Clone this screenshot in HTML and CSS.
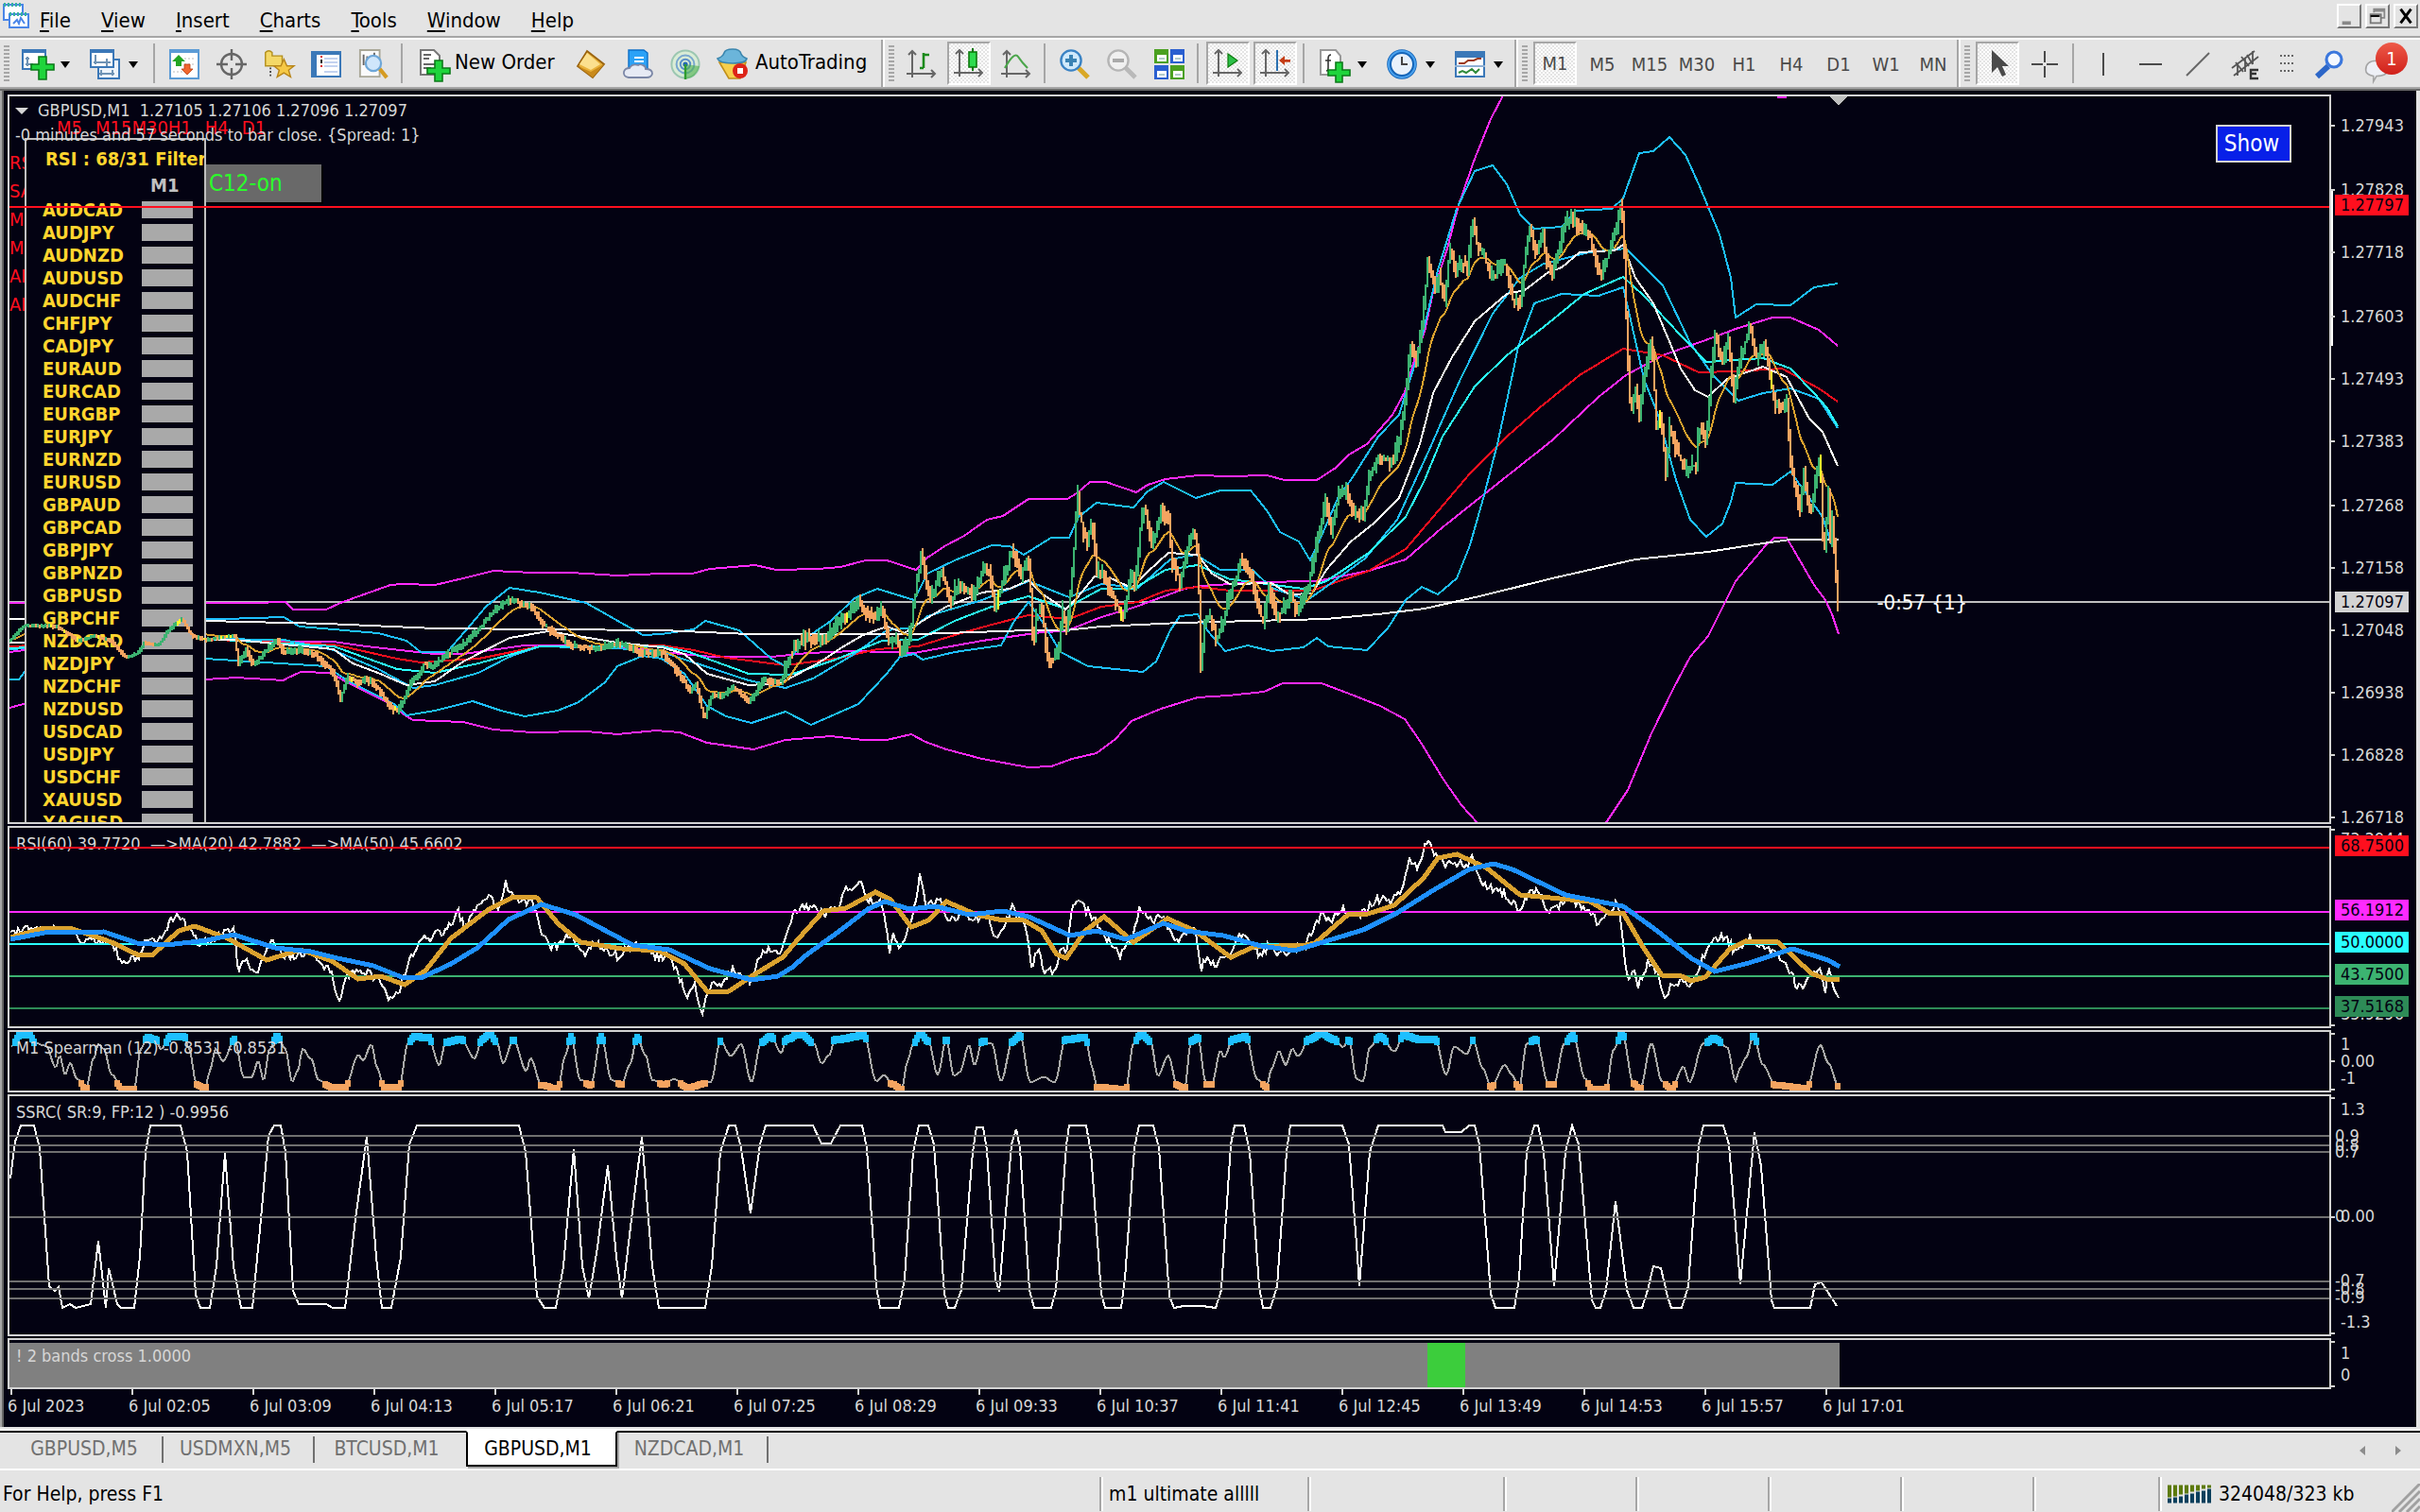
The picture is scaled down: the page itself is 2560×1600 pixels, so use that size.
FILE: index.html
```html
<!DOCTYPE html>
<html lang="en">

<head>
    <meta charset="UTF-8">
    <meta name="viewport" content="width=device-width, initial-scale=1.0">
    <title>GBPUSD,M1</title>
    <link rel="stylesheet" href="styles.css">
</head>

<body>
    <header class="menubar">
        <svg class="app-icon" viewBox="0 0 15 14">
            <rect x="1" y="1" width="10" height="8" fill="#fff" stroke="#4a86e8" />
            <path d="M1 1h10" stroke="#35b0a0" stroke-width="2" stroke-dasharray="1 1" />
            <rect x="4" y="6" width="10" height="7" fill="#fff" stroke="#4a86e8" />
            <path d="M4 6h10" stroke="#35b0a0" stroke-width="2" stroke-dasharray="1 1" />
            <path d="M6 11l2-2 1 2 1-3 2 3" fill="none" stroke="#4a86e8" />
        </svg>
        <nav class="menu">
            <button><u>F</u>ile</button>
            <button><u>V</u>iew</button>
            <button><u>I</u>nsert</button>
            <button><u>C</u>harts</button>
            <button><u>T</u>ools</button>
            <button><u>W</u>indow</button>
            <button><u>H</u>elp</button>
        </nav>
        <div class="window-buttons">
            <button aria-label="Minimize"><svg viewBox="0 0 12 12"><path d="M2 10h5" stroke="#888" stroke-width="2" /></svg></button>
            <button aria-label="Restore"><svg viewBox="0 0 12 12"><path d="M4 4V2h6v5H8M4 3h6" fill="none" stroke="#888" /><path d="M2 5h6v5H2zM2 6h6" fill="none" stroke="#777" /><path d="M2 6h5" stroke="#000" /></svg></button>
            <button aria-label="Close"><svg viewBox="0 0 12 12"><path d="M3 2l6 8M9 2L3 10" stroke="#000" stroke-width="1.6" /></svg></button>
        </div>
    </header>

    <div class="toolbar">
        <span class="grip"></span>
        <button class="tool drop" aria-label="New chart">
            <svg viewBox="0 0 16 16"><rect x="0.5" y="0.5" width="12" height="10" fill="#fff" stroke="#3b78b8" /><path d="M0 1h13" stroke="#3b78b8" stroke-width="2" /><path d="M3 4v5M2 8h4M2 5h2" stroke="#6f93b5" fill="none" /><path d="M9 4h4v4h4v3h-4v5H9v-5H5V8h4z" fill="#1fd43c" stroke="#0b7a18" stroke-width=".8" /></svg>
        </button>
        <button class="tool drop" aria-label="Profiles">
            <svg viewBox="0 0 16 16"><rect x="4.500" y="5.500" width="11" height="10" fill="#eef4fb" stroke="#3b78b8" /><rect x="0.500" y="0.500" width="12" height="9" fill="#fff" stroke="#3b78b8" /><path d="M0 1h13" stroke="#3b78b8" stroke-width="2" /><path d="M3 3v5M2 7h9M9 5v4M6 11v3M5 13h8M12 11v3" stroke="#6f93b5" fill="none" /></svg>
        </button>
        <span class="sep"></span>
        <button class="tool" aria-label="Market Watch">
            <svg viewBox="0 0 16 16"><rect x="0.500" y="0.500" width="15" height="15" fill="#fff" stroke="#5b9bd5" /><path d="M0 1h16" stroke="#5b9bd5" stroke-width="2" /><path d="M8 5h6M8 8h6M2 12h6" stroke="#ddd" stroke-dasharray="1 1" /><path d="M5 3l3.500 3.500H6.500V9h-3V6.500h-2z" fill="#23a523" /><path d="M9.500 13.500L6.500 10.500h1.500V8h3v2.500h1.500z" fill="#f0672d" stroke="#b53c12" stroke-width=".4" /></svg>
        </button>
        <button class="tool" aria-label="Data point">
            <svg viewBox="0 0 16 16"><circle cx="8" cy="8" r="5.500" fill="none" stroke="#666" stroke-width="1.200" /><path d="M8 0v6M8 10v6M0 8h6M10 8h6" stroke="#666" stroke-width="1.200" /></svg>
        </button>
        <button class="tool" aria-label="Navigator">
            <svg viewBox="0 0 18 16"><path d="M1 1q2-2 4 0v2h6v6H1z" fill="#f4d867" stroke="#b38f1c" stroke-width=".8" /><path d="M4 10v6" stroke="#444" stroke-dasharray="1 1" /><path d="M12 5l1.800 4H18l-3.200 2.500 1.200 4-4-2.400-4 2.400 1.200-4L6 9h4.200z" fill="#f6c945" stroke="#b8861b" stroke-width=".8" /></svg>
        </button>
        <button class="tool" aria-label="Data Window">
            <svg viewBox="0 0 16 16"><rect x="0.500" y="1.500" width="15" height="13" fill="#fff" stroke="#3b78b8" /><path d="M0 2h16" stroke="#3b78b8" stroke-width="2" /><path d="M2 2v12" stroke="#3b78b8" stroke-width="2" /><path d="M5 4h1M5 9h1" stroke="#d22" /><path d="M5 6h1M5 7h1" stroke="#222" /><path d="M7 5h7M7 7h7M7 9h7M7 12h7" stroke="#c3d2f0" /></svg>
        </button>
        <button class="tool" aria-label="Strategy Tester">
            <svg viewBox="0 0 17 17"><path d="M1 .5h11v15H1z" fill="#fafafa" stroke="#a9a797" /><path d="M3 3v6M5 4v3M9 2v4" stroke="#666" /><path d="M12 11l4 5" stroke="#d59b22" stroke-width="2.200" /><circle cx="8.500" cy="8" r="4.300" fill="#cfe6fb" stroke="#6ea7d8" stroke-width="1.200" /></svg>
        </button>
        <span class="sep"></span>
        <button class="tool wide new-order">
            <svg viewBox="0 0 16 16"><path d="M.5.500h7l3 3v10H.5z" fill="#fff" stroke="#777" /><path d="M2 3h4M2 5h3M2 8h6M2 10h4" stroke="#666" /><path d="M8 6h4v4h4v3h-4v4H8v-4H4v-3h4z" fill="#1fd43c" stroke="#0b7a18" stroke-width=".8" /></svg>
            <span>New Order</span>
        </button>
        <button class="tool" aria-label="MetaEditor">
            <svg viewBox="0 0 16 16"><path d="M6 1l9 7-6 7L1 9z" fill="#e9b23a" stroke="#9a6410" stroke-width=".9" /><path d="M6 2l7 6-5 3-6-3z" fill="#fbe08e" /><path d="M1 9l7 3 7-4-6 7z" fill="#c98a1b" /></svg>
        </button>
        <button class="tool" aria-label="Virtual hosting">
            <svg viewBox="0 0 16 16"><path d="M3 .5h8l2 1.500v9H3z" fill="#2ba2f7" stroke="#0e6fc7" stroke-width=".7" /><path d="M6 4h5v1H6zM6 6h5v1H6z" fill="#fff" /><path d="M3 15q-3-.5-2.500-3Q1 10 3.500 10 5 7.500 8 8.500q1-.8 2.500 0Q12 8.800 12 10.500q3.500 0 3.500 2.500-.5 2-3 2z" fill="#e6eaf4" stroke="#7a86a6" stroke-width=".9" /></svg>
        </button>
        <button class="tool" aria-label="Signals">
            <svg viewBox="0 0 16 16"><circle cx="8" cy="8" r="7.300" fill="#d9ecd6" stroke="#9cc7b2" /><circle cx="8" cy="8" r="4.700" fill="none" stroke="#79a7cf" /><circle cx="8" cy="8" r="2.600" fill="none" stroke="#5a8fc9" /><path d="M8 8v8q6-1 7.500-7z" fill="#4bb14b" opacity=".6" /><circle cx="8" cy="8" r="1.300" fill="#2469b3" /><path d="M8 8v8" stroke="#2e9c2e" stroke-width="1.200" /></svg>
        </button>
        <button class="tool wide auto-trading">
            <svg viewBox="0 0 16 16"><path d="M1 7h14l-3 8.500H6z" fill="#f6cf4c" stroke="#c08f1a" stroke-width=".8" /><path d="M0 5q3-1 3.500-3Q4 0 8 0t4.500 2.500Q13 4 15.500 5 15 7.500 8 7.500T0 5z" fill="#6bb5da" stroke="#3b86ae" stroke-width=".8" /><circle cx="12" cy="11.500" r="4" fill="#dd2418" /><rect x="10.500" y="10" width="3" height="3" fill="#fff" /></svg>
            <span>AutoTrading</span>
        </button>

        <span class="band"><span class="grip"></span></span>
        <button class="tool" aria-label="Bar chart">
            <svg viewBox="0 0 16 16"><path d="M3 1v14M0 13h15M1 3l2-2 2 2M13 11l2 2-2 2" fill="none" stroke="#666" /><path d="M9 10V2M9 3h3M7 10h2" stroke="#1b8a1b" stroke-width="1.300" fill="none" /></svg>
        </button>
        <button class="tool pressed" aria-label="Candlesticks">
            <svg viewBox="0 0 16 16"><path d="M3 1v14M0 13h15M1 3l2-2 2 2M13 11l2 2-2 2" fill="none" stroke="#666" /><path d="M10 0v12" stroke="#0c7a0c" /><rect x="8" y="2" width="4" height="8" fill="#2edb4e" stroke="#0c7a0c" stroke-width=".8" /></svg>
        </button>
        <button class="tool" aria-label="Line chart">
            <svg viewBox="0 0 16 16"><path d="M3 1v14M0 13h15M1 3l2-2 2 2M13 11l2 2-2 2" fill="none" stroke="#666" /><path d="M2 10q5-9 7-6t5 6" fill="none" stroke="#4aa54a" stroke-width="1.100" /></svg>
        </button>
        <span class="sep"></span>
        <button class="tool" aria-label="Zoom in">
            <svg viewBox="0 0 16 16"><path d="M10 10l5 5" stroke="#d9a826" stroke-width="2.600" /><circle cx="6" cy="6" r="5.300" fill="#cfe9fb" stroke="#3a83c4" stroke-width="1.200" /><path d="M6 3v6M3 6h6" stroke="#3a83b4" stroke-width="2" /></svg>
        </button>
        <button class="tool" aria-label="Zoom out">
            <svg viewBox="0 0 16 16"><path d="M10 10l5 5" stroke="#b9b9b9" stroke-width="2.400" /><circle cx="6" cy="6" r="5.300" fill="#f0f0f0" stroke="#b5b5b5" stroke-width="1.200" /><path d="M3 6h6" stroke="#aaa" stroke-width="2" /></svg>
        </button>
        <button class="tool" aria-label="Tile windows">
            <svg viewBox="0 0 16 16"><path d="M0 0h7.500v7.500H0zM8.500 8.500H16V16H8.500z" fill="#4aa020" /><path d="M8.500 0H16v7.500H8.500zM0 8.500h7.500V16H0z" fill="#2a5fd0" /><path d="M1.500 3h5v3.500h-5zM10 3h5v3.500h-5zM1.500 11.500h5V15h-5zM10 11.500h5V15h-5z" fill="#fff" /><path d="M2.500 5h3M11 5h3M2.500 13.500h3M11 13.500h3" stroke="#9bb" stroke-width=".8" /></svg>
        </button>
        <span class="sep"></span>
        <button class="tool pressed" aria-label="Auto scroll">
            <svg viewBox="0 0 16 16"><path d="M3 1v14M0 13h15M1 3l2-2 2 2M13 11l2 2-2 2" fill="none" stroke="#666" /><path d="M8 3l5 3.500-5 3.500z" fill="#2bc048" stroke="#0c7a0c" stroke-width=".6" /></svg>
        </button>
        <button class="tool pressed" aria-label="Chart shift">
            <svg viewBox="0 0 16 16"><path d="M3 1v14M0 13h15M1 3l2-2 2 2M13 11l2 2-2 2" fill="none" stroke="#666" /><path d="M9 1v11" stroke="#2a70b0" /><path d="M10 6.500l3-2.500v2h3v1.400h-3V9z" fill="#c43c14" /></svg>
        </button>
        <span class="sep"></span>
        <button class="tool drop" aria-label="Indicators">
            <svg viewBox="0 0 16 16"><path d="M1 .5h8l2.500 3v10H1z" fill="#fff" stroke="#999" /><path d="M6.500 3q-1.500 0-1.500 2v5q0 1.500-1 1.500M3.500 6h3" fill="none" stroke="#333" stroke-width=".8" /><path d="M9 7h3.500v4h4v3h-4v3.500H9V14H5v-3h4z" fill="#1fd43c" stroke="#0b7a18" stroke-width=".8" /></svg>
        </button>
        <button class="tool drop" aria-label="Periods">
            <svg viewBox="0 0 16 16"><circle cx="8" cy="8" r="6.700" fill="#e8f1fb" stroke="#1565b8" stroke-width="2.400" /><circle cx="8" cy="8" r="7" fill="none" stroke="#49a1ee" /><path d="M8 4v4h3" fill="none" stroke="#444" /></svg>
        </button>
        <button class="tool drop" aria-label="Templates">
            <svg viewBox="0 0 16 16"><rect x="0.500" y="1.500" width="15" height="13" fill="#fff" stroke="#3b78b8" /><path d="M0 3h16" stroke="#3b78b8" stroke-width="3" /><path d="M0 9h16" stroke="#8fb0d4" /><path d="M2 7.500h3l2-1.500h3l2-1h2" fill="none" stroke="#9c3a1c" /><path d="M2 12.500l2-1 2 1 3-2 2 2 2-2" fill="none" stroke="#2f8a3a" /></svg>
        </button>

        <span class="band"><span class="grip"></span></span>
        <button class="tool pressed">M1</button>
        <button class="tool">M5</button>
        <button class="tool">M15</button>
        <button class="tool">M30</button>
        <button class="tool">H1</button>
        <button class="tool">H4</button>
        <button class="tool">D1</button>
        <button class="tool">W1</button>
        <button class="tool">MN</button>

        <span class="band"><span class="grip"></span></span>
        <button class="tool pressed" aria-label="Cursor">
            <svg viewBox="0 0 16 16"><path d="M5 1v12l3-3 2.500 5 2-1L10.500 9.500H14z" fill="#4a4a4a" /></svg>
        </button>
        <button class="tool" aria-label="Crosshair">
            <svg viewBox="0 0 16 16"><path d="M8 1v6M8 9v6M1 8h6M9 8h6" stroke="#4a4a4a" /></svg>
        </button>
        <span class="sep"></span>
        <button class="tool" aria-label="Vertical line">
            <svg viewBox="0 0 16 16"><path d="M8 2v12" stroke="#4a4a4a" /></svg>
        </button>
        <button class="tool" aria-label="Horizontal line">
            <svg viewBox="0 0 16 16"><path d="M2 8h12" stroke="#4a4a4a" /></svg>
        </button>
        <button class="tool" aria-label="Trendline">
            <svg viewBox="0 0 16 16"><path d="M2 14L14 2" stroke="#666" /></svg>
        </button>
        <button class="tool" aria-label="Equidistant channel">
            <svg viewBox="0 0 16 16"><path d="M1 10L13 1M2 14L15 4M3 7l4 5M6 4l4 5M9 3l3 5M4 8v6M8 5v7M12 1v7" stroke="#555" stroke-width=".9" /><path d="M15 11h-4v4.500h4M11 13h3" fill="none" stroke="#333" stroke-width="1.200" /></svg>
        </button>
        <span class="dots"></span>
        <span class="spring"></span>
        <button class="tool search" aria-label="Search">
            <svg viewBox="0 0 16 16"><path d="M7 9l-6 5.500" stroke="#2c66c8" stroke-width="3" /><circle cx="10" cy="5.500" r="4" fill="#f4f8ff" stroke="#3b77dd" stroke-width="1.600" /></svg>
        </button>
        <button class="tool chat" aria-label="Notifications">
            <svg viewBox="0 0 16 16"><path d="M1 8q0-6 7-6t7 6q0 4-7 4l-2 3.500V12Q1 11 1 8z" fill="#eef0f6" stroke="#a5a5a5" /></svg>
            <span class="badge">1</span>
        </button>
    </div>

    <main class="chart">
        <section class="pane">
            <div class="plot">
                <svg class="layer" id="bands" viewBox="10 102 2454 768" preserveAspectRatio="none"></svg>
                <div class="red-head"><span>M5</span><span>M15M30H1</span><span>H4</span><span>D1</span></div>
                <ul class="red-list">
                    <li>RS</li>
                    <li>SA</li>
                    <li>M</li>
                    <li>M</li>
                    <li>AI</li>
                    <li>AI</li>
                </ul>
                <button class="c12">C12-on</button>
                <div class="filter">
                    <h2>RSI : 68/31 Filter</h2>
                    <h3>M1</h3>
                    <ul id="pairs"></ul>
                </div>
                <svg class="layer" id="price" viewBox="10 102 2454 768" preserveAspectRatio="none"></svg>
                <div class="heading"><span class="arrow"></span>GBPUSD,M1 &nbsp;1.27105 1.27106 1.27096 1.27097</div>
                <div class="countdown">-0 minutes and 57 seconds to bar close. {Spread: 1}</div>
                <div class="bar-timer">-0:57 {1}</div>
                <button class="show">Show</button>
            </div>
            <div class="axis" id="axis-price"><span class="range"></span></div>
        </section>
        <section class="pane">
            <div class="plot">
                <div class="title">RSI(60) 39.7720 &nbsp;—&gt;MA(20) 42.7882 &nbsp;—&gt;MA(50) 45.6602</div>
                <svg class="layer" id="rsi" viewBox="10 876 2454 210" preserveAspectRatio="none"></svg>
            </div>
            <div class="axis" id="axis-rsi"></div>
        </section>
        <section class="pane">
            <div class="plot">
                <svg class="layer" id="spearman" viewBox="10 1092 2454 62" preserveAspectRatio="none"></svg>
                <div class="title">M1 Spearman (12) -0.8531 -0.8531</div>
            </div>
            <div class="axis" id="axis-spearman"></div>
        </section>
        <section class="pane">
            <div class="plot">
                <div class="title">SSRC( SR:9, FP:12 ) -0.9956</div>
                <svg class="layer" id="ssrc" viewBox="10 1160 2454 252" preserveAspectRatio="none"></svg>
            </div>
            <div class="axis" id="axis-ssrc"></div>
        </section>
        <section class="pane">
            <div class="plot">
                <svg class="layer" id="cross" viewBox="10 1418 2454 50" preserveAspectRatio="none">
                    <rect x="10" y="1421" width="1936" height="47" fill="#808080" />
                    <rect x="1510" y="1421" width="40" height="47" fill="#3ccd3c" />
                </svg>
                <div class="title">! 2 bands cross 1.0000</div>
            </div>
            <div class="axis" id="axis-cross"></div>
        </section>
        <ol class="times" id="times"></ol>
    </main>

    <div class="tabs">
        <button>GBPUSD,M5</button>
        <button>USDMXN,M5</button>
        <button>BTCUSD,M1</button>
        <button class="active">GBPUSD,M1</button>
        <button>NZDCAD,M1</button>
        <svg class="tab-arrows" viewBox="0 0 44 10"><path d="M6 0v10L0 5zM38 0v10l6-5z" fill="#8c8c8c" /></svg>
    </div>

    <footer class="status">
        <span class="help">For Help, press F1</span>
        <span class="profile">m1 ultimate alllll</span>
        <span class="cell date"></span>
        <span class="cell"></span>
        <span class="cell"></span>
        <span class="cell"></span>
        <span class="cell"></span>
        <span class="cell volume"></span>
        <span class="traffic">
            <svg viewBox="0 0 46 19"><path d="M2 0v13M8 0v12M14 0v10M20 0v9M26 0v7M32 0v6M38 0v4M44 0v3" stroke="#5c7a0c" stroke-width="4" /><path d="M2 19v-5M8 19v-6M14 19v-7M20 19v-9M26 19v-10M32 19v-12M38 19v-13M44 19v-15" stroke="#0b3f5c" stroke-width="4" /></svg>
            324048/323 kb
        </span>
        <svg class="resize" viewBox="0 0 30 30"><path d="M0 30L30 0M8 30L30 8M16 30L30 16M24 30l6-6" stroke="#a0a0a0" stroke-width="3" /></svg>
    </footer>

    <script src="script.js"></script>
</body>

</html>
```

FILE: styles.css
```css
* {
    box-sizing: border-box;
}

body {
    margin: 0;
    height: 100vh;
    display: flex;
    flex-direction: column;
    overflow: hidden;
    background-color: #e4e4e4;
    color: #000;
    font-family: "DejaVu Sans Condensed", "DejaVu Sans", Tahoma, sans-serif;
    font-size: 22px;
    line-height: 22px;
    white-space: nowrap;
}

button {
    font: inherit;
    color: inherit;
    background: none;
    border: none;
    padding: 0;
}

ul,
ol {
    list-style: none;
    margin: 0;
    padding: 0;
}

/* menu */
.menubar {
    flex: none;
    display: flex;
    align-items: center;
    height: 42px;
    padding: 0 2px;
    border-bottom: 2px solid #fff;
    box-shadow: inset 0 -2px #a6a6a6;
}

.app-icon {
    width: 30px;
    height: 28px;
    margin-right: 10px;
    margin-top: -6px;
}

.menu {
    display: flex;
    gap: 32px;
    padding-top: 4px;
}

.menu u {
    text-underline-offset: 3px;
}

.window-buttons {
    display: flex;
    gap: 4px;
    margin-left: auto;
    margin-bottom: 6px;
}

.window-buttons button {
    width: 26px;
    height: 26px;
    border: 2px solid #fff;
    border-right-color: #777;
    border-bottom-color: #777;
}

.window-buttons svg {
    display: block;
    width: 22px;
    height: 22px;
}

/* toolbar */
.toolbar {
    flex: none;
    display: flex;
    align-items: stretch;
    height: 54px;
    border-bottom: 2px solid #6a6a6a;
    box-shadow: inset 0 -2px #a6a6a6;
    padding-bottom: 2px;
}

.grip {
    flex: none;
    align-self: center;
    width: 6px;
    height: 38px;
    margin: 0 4px;
    background: repeating-linear-gradient(#a6a6a6 0 2px, transparent 2px 4px);
}

.band {
    flex: none;
    display: flex;
    width: 18px;
    border-left: 2px solid #a6a6a6;
    box-shadow: inset 2px 0 #fff;
}

.band .grip {
    margin-left: 6px;
}

.sep {
    flex: none;
    width: 2px;
    margin: 4px 6px 4px 4px;
    background-color: #a6a6a6;
}

.tool {
    flex: none;
    display: flex;
    align-items: center;
    justify-content: center;
    width: 50px;
    padding-top: 2px;
    color: #4a4a4a;
    font-size: 20px;
}

.tool svg {
    width: 32px;
    height: 32px;
    overflow: visible;
}

.pressed {
    width: 46px;
    margin: 2px;
    padding: 0;
    border: 2px solid #fff;
    border-top-color: #a6a6a6;
    border-left-color: #a6a6a6;
    background: repeating-conic-gradient(#fff 0 25%, #e4e4e4 0 50%) 0 0 / 4px 4px;
}

.drop {
    width: 72px;
    justify-content: flex-start;
    gap: 9px;
    padding-left: 9px;
}

.drop::after {
    content: "";
    border: 5px solid transparent;
    border-top: 7px solid #000;
    border-bottom: none;
}

.wide {
    justify-content: flex-start;
    gap: 5px;
    font-size: 22px;
    color: #000;
    padding-left: 12px;
}

.wide span {
    padding-bottom: 4px;
}

.new-order {
    width: 168px;
}

.auto-trading {
    width: 182px;
    padding-left: 9px;
    gap: 8px;
}

.dots {
    width: 16px;
    height: 28px;
    margin: 10px 0 0 12px;
    background: repeating-linear-gradient(#e4e4e4 0 6px, transparent 6px 8px), repeating-linear-gradient(90deg, #666 0 2px, #e4e4e4 2px 4px);
}

.spring {
    flex: 1;
}

.search {
    width: 60px;
}

.chat {
    position: relative;
    width: 60px;
    margin-right: 5px;
    justify-content: flex-start;
    align-items: flex-end;
    padding: 0 0 5px 6px;
}

.chat svg {
    width: 26px;
    height: 26px;
}

.badge {
    position: absolute;
    top: 3px;
    right: 8px;
    width: 34px;
    height: 34px;
    border-radius: 50%;
    background: linear-gradient(#ee5a48, #d0201a);
    color: #fff;
    line-height: 34px;
}

/* chart window */
.chart {
    flex: 1;
    min-height: 0;
    display: grid;
    grid-template-rows: minmax(0, 1fr) 214px 66px 256px 54px 38px;
    row-gap: 2px;
    padding: 4px 0 0 4px;
    margin-right: 4px;
    border-left: 2px solid #a6a6a6;
    box-shadow: inset 2px 0 #666;
    background-color: #030212;
    color: #d6d6d6;
    font-size: 18px;
}

.pane {
    display: grid;
    grid-template-columns: minmax(0, 1fr) 90px;
    min-height: 0;
    padding-left: 2px;
}

.plot {
    position: relative;
    overflow: hidden;
    border: 2px solid #d3d3d3;
}

.layer {
    position: absolute;
    inset: 0;
    width: 100%;
    height: 100%;
    fill: none;
    stroke-width: 2;
    shape-rendering: crispEdges;
}

.title {
    position: absolute;
    top: 6px;
    left: 7px;
}

.heading {
    position: absolute;
    top: 4px;
    left: 6px;
    display: flex;
    align-items: center;
    gap: 10px;
}

.arrow {
    border: 7px solid transparent;
    border-top: 7px solid #d6d6d6;
    border-bottom: none;
}

.countdown {
    position: absolute;
    top: 30px;
    left: 6px;
}

.bar-timer {
    position: absolute;
    left: 80.5%;
    top: 68.4%;
    color: #fff;
    font-size: 22px;
}

.show {
    position: absolute;
    top: 30px;
    right: 40px;
    width: 80px;
    height: 40px;
    padding-right: 4px;
    border: 2px solid #d3d3d3;
    background-color: #0820e8;
    color: #fff;
    font-size: 24px;
}

.red-head {
    position: absolute;
    top: 22px;
    left: 50px;
    display: flex;
    gap: 14px;
    color: #ff0f1e;
    font-size: 20px;
}

.red-list {
    position: absolute;
    top: 55px;
    left: 0;
    line-height: 30px;
    color: #ff0f1e;
    font-size: 20px;
}

.c12 {
    position: absolute;
    top: 72px;
    left: 208px;
    width: 122px;
    height: 40px;
    padding-left: 3px;
    text-align: left;
    background-color: #696969;
    box-shadow: 2px 2px #000;
    color: #2aff2a;
    font-size: 24px;
}

.filter {
    position: absolute;
    top: 44px;
    bottom: 0;
    left: 16px;
    width: 192px;
    overflow: hidden;
    border: 2px solid #c0c0c0;
    border-bottom: none;
    background-color: #030212;
    color: #ffd52e;
    font-size: 20px;
    font-weight: bold;
}

.filter h2,
.filter h3 {
    margin: 0;
    font-size: 20px;
    line-height: 22px;
}

.filter h2 {
    padding: 9px 0 0 20px;
}

.filter h3 {
    padding: 6px 0 3px 131px;
    color: #c0c0c0;
}

.filter li {
    display: flex;
    justify-content: space-between;
    align-items: center;
    height: 24px;
    padding: 0 12px 0 17px;
}

.filter li::after {
    content: "";
    width: 54px;
    height: 18px;
    background-color: #a9a9a9;
}

/* scales */
.axis {
    position: relative;
    overflow: hidden;
}

.axis span {
    position: absolute;
    left: 10px;
    margin-top: -11px;
}

.axis .tick {
    left: 0;
    width: 4px;
    height: 2px;
    margin-top: -1px;
    background-color: #d3d3d3;
}

.axis .tag {
    left: 4px;
    width: 78px;
    padding-left: 6px;
    color: #030212;
}

.axis .near {
    left: 4px;
}

.axis .range {
    left: 0;
    top: 13%;
    width: 2px;
    height: 166px;
    margin: 0;
    background-color: #fff;
}

.times {
    display: flex;
    margin-top: -2px;
    padding-left: 2px;
}

.times li {
    position: relative;
    flex: 0 0 128px;
    padding-top: 7px;
}

.times li::before {
    content: "";
    position: absolute;
    top: 0;
    left: 3px;
    width: 2px;
    height: 6px;
    background-color: #d3d3d3;
}

/* chart tabs */
.tabs {
    flex: none;
    display: flex;
    align-items: flex-start;
    height: 44px;
    margin-top: 2px;
    padding-left: 13px;
    border-top: 2px solid #fff;
    border-bottom: 2px solid #fff;
    box-shadow: inset 0 2px #000;
    color: #707070;
    font-size: 21px;
}

.tabs button {
    position: relative;
    width: 160px;
    height: 38px;
    padding-right: 8px;
}

.tabs button::after {
    content: "";
    position: absolute;
    right: 0;
    top: 6px;
    width: 2px;
    height: 28px;
    background-color: #707070;
}

.tabs .active {
    background-color: #fff;
    color: #000;
    border: 2px solid #000;
    border-top-color: #fff;
    box-shadow: 2px 2px #a6a6a6;
}

.tabs .active::after,
.tabs button:nth-child(3)::after {
    display: none;
}

.tab-arrows {
    width: 44px;
    height: 10px;
    margin: 16px 20px 0 auto;
}

/* status bar */
.status {
    flex: none;
    display: flex;
    align-items: center;
    height: 44px;
    padding: 6px 0 0 3px;
    font-size: 21px;
}

.status span {
    height: 36px;
    line-height: 36px;
}

.status .help {
    flex: 1;
}

.status .profile,
.status .cell,
.status .traffic {
    border-left: 2px solid #a6a6a6;
    box-shadow: inset 2px 0 #fff;
    padding-left: 8px;
}

.status .profile {
    width: 220px;
}

.status .cell {
    width: 140px;
}

.status .date {
    width: 207px;
}

.status .volume {
    width: 133px;
}

.status .traffic {
    display: flex;
    align-items: center;
    gap: 8px;
    width: 247px;
}

.traffic svg {
    width: 46px;
    height: 26px;
}

.resize {
    width: 30px;
    height: 30px;
    align-self: flex-end;
}
```

FILE: script.js
```js
const SVG = 'http://www.w3.org/2000/svg';
const LAST_X = 1945;

// every list is x,y,x,y...
const magentaUpper = [10,638,26,638,217,638,267,638,302,637,310,645,345,645,360,638,413,619,425,618,460,619,490,612,522,604,563,606,604,606,653,609,700,607,732,607,751,602,799,598,821,603,865,602,889,600,916,593,938,593,969,603,981,590,1001,577,1020,567,1044,550,1061,546,1088,528,1129,528,1139,522,1153,510,1170,510,1202,521,1214,513,1233,507,1267,503,1301,504,1340,503,1359,508,1393,508,1413,495,1427,481,1446,470,1473,439,1486,415,1497,378,1507,351,1516,309,1531,263,1543,217,1560,168,1577,126,1590,101];
const magentaLower = [10,749,25,745,217,719,250,717,300,720,303,718,318,711,350,712,367,722,413,745,430,758,437,762,490,764,522,772,563,775,620,774,653,777,694,773,719,775,748,786,797,793,831,783,879,779,913,783,938,783,964,777,979,785,1001,793,1039,803,1088,812,1112,811,1134,803,1160,797,1180,782,1197,763,1228,750,1267,738,1299,736,1337,732,1357,723,1398,723,1427,734,1460,747,1486,761,1502,784,1527,825,1546,852,1564,872,1698,872,1722,836,1747,776,1771,727,1788,695,1807,673,1836,615,1868,577,1877,569,1890,569,1919,619,1931,635,1938,650,1945,671];
const magentaMid = [10,690,26,688,217,676,248,678,353,679,387,684,460,692,490,692,555,683,653,684,700,690,753,695,816,695,855,691,904,689,967,691,1039,678,1102,669,1127,668,1165,653,1199,643,1253,623,1272,620,1330,616,1393,615,1448,604,1487,592,1526,558,1565,527,1594,504,1642,466,1691,420,1720,397,1759,376,1807,359,1836,348,1875,336,1894,336,1924,349,1944,366];
const red = [10,684,217,676,248,678,353,682,420,697,445,701,506,697,571,684,700,683,734,688,768,696,831,704,884,697,928,687,971,684,1010,672,1049,661,1088,651,1131,655,1165,642,1204,637,1233,625,1267,621,1301,625,1388,625,1448,604,1487,581,1516,547,1555,501,1594,462,1628,432,1671,397,1717,369,1759,376,1797,394,1836,393,1885,390,1924,411,1944,425];
const whiteSlow = [10,655,217,657,345,660,460,665,700,667,792,671,971,671,1088,667,1127,667,1165,663,1248,659,1403,655,1458,650,1507,644,1565,631,1642,612,1730,592,1807,584,1865,575,1894,571,1945,571];
const whiteFast = [10,680,217,676,260,678,300,682,353,687,373,702,400,712,430,725,460,721,490,700,539,675,580,668,653,680,700,685,724,692,748,713,792,725,826,723,865,702,894,683,913,672,938,663,957,670,971,660,1001,642,1039,627,1068,623,1088,614,1102,628,1127,645,1139,633,1158,610,1175,612,1197,622,1214,605,1236,585,1267,587,1282,607,1301,618,1345,617,1364,629,1388,628,1403,603,1429,573,1453,554,1480,527,1502,470,1516,416,1536,378,1560,340,1594,311,1613,307,1638,288,1652,283,1671,267,1708,265,1717,259,1730,294,1749,321,1778,390,1793,413,1807,420,1827,401,1865,388,1890,399,1914,443,1928,457,1944,493];
const cyan = [10,686,217,676,353,684,420,708,460,712,506,702,571,684,700,684,729,690,792,713,836,714,884,698,933,678,971,677,1010,657,1049,642,1088,631,1127,644,1165,623,1199,623,1233,603,1267,598,1301,613,1379,623,1403,615,1448,585,1487,547,1507,508,1526,462,1560,409,1594,376,1633,346,1676,311,1717,293,1739,313,1778,355,1805,383,1865,379,1894,390,1919,416,1933,432,1944,451];
const blueMid = [10,687,217,676,300,677,353,688,400,708,437,728,460,725,506,712,539,695,571,684,653,686,700,690,792,720,831,728,860,718,904,692,938,667,967,664,981,652,1039,635,1088,615,1131,632,1165,618,1204,622,1238,592,1265,587,1291,603,1325,603,1345,622,1383,635,1400,623,1444,591,1478,550,1511,478,1545,401,1579,332,1608,294,1633,279,1681,267,1720,263,1759,302,1788,363,1812,397,1839,424,1865,416,1894,411,1924,422,1944,453];
const blueUpper = [10,655,238,655,300,653,317,663,400,670,430,678,445,690,473,690,498,661,514,642,539,622,571,627,620,638,680,672,700,671,734,666,746,657,782,667,816,697,831,705,850,677,879,657,904,633,928,623,967,635,981,607,1010,593,1049,577,1068,578,1083,587,1112,569,1131,569,1141,547,1160,532,1199,537,1214,520,1231,510,1265,527,1291,519,1323,519,1340,540,1354,563,1374,573,1386,593,1398,567,1417,523,1429,508,1458,462,1480,439,1499,378,1521,286,1541,221,1560,181,1579,175,1594,195,1608,227,1623,242,1652,240,1667,223,1705,221,1717,210,1734,162,1749,160,1766,145,1783,164,1797,195,1819,248,1831,294,1836,336,1858,322,1894,323,1919,304,1944,300];
const blueLower = [10,719,20,719,26,711,217,697,345,705,367,720,417,745,430,757,460,752,500,742,530,752,555,758,590,752,612,743,640,722,653,705,680,694,700,697,724,713,748,747,768,758,795,765,831,753,858,767,908,745,938,713,952,695,967,692,976,698,1010,690,1059,683,1073,657,1088,637,1102,657,1122,690,1151,705,1209,711,1223,700,1238,667,1248,652,1267,650,1277,667,1296,689,1320,683,1345,689,1379,685,1393,675,1405,684,1446,688,1468,665,1487,635,1504,621,1521,629,1541,612,1555,577,1570,524,1584,470,1599,401,1606,367,1623,321,1652,311,1691,313,1717,304,1722,325,1739,401,1754,439,1773,508,1788,550,1805,568,1822,554,1831,531,1836,511,1875,513,1894,499,1909,520,1928,547,1938,577];
const price = [10,677,25,661,60,662,83,677,100,672,117,677,133,695,147,689,152,679,167,682,178,666,192,654,203,672,217,676,248,672,252,702,260,687,268,702,287,682,293,677,300,689,320,687,333,692,343,702,353,712,360,738,367,715,380,722,387,717,400,728,413,748,420,751,428,738,435,720,443,712,448,702,457,704,475,690,490,681,510,660,522,645,539,633,563,642,575,661,604,682,630,686,653,680,680,690,700,690,715,707,729,730,736,723,745,760,753,733,763,737,775,725,792,743,807,720,826,720,836,690,845,677,855,673,865,677,882,663,894,650,908,637,920,650,933,647,941,683,947,673,952,690,962,673,967,633,974,587,984,633,996,603,1005,637,1013,617,1030,627,1039,603,1047,603,1052,642,1061,613,1070,580,1080,607,1085,593,1089,600,1093,687,1096,653,1101,640,1109,703,1119,690,1124,647,1129,667,1134,603,1140,520,1142,543,1149,575,1155,550,1160,603,1168,607,1175,627,1187,653,1197,603,1201,620,1207,547,1211,537,1219,577,1228,540,1236,550,1240,593,1248,617,1255,583,1261,557,1267,583,1270,707,1274,660,1279,650,1287,677,1294,653,1301,627,1313,590,1323,607,1330,640,1336,660,1342,620,1350,650,1355,647,1367,630,1371,647,1383,623,1393,573,1402,527,1408,560,1416,523,1425,520,1433,543,1442,543,1448,504,1457,485,1473,487,1480,466,1487,416,1492,363,1498,382,1504,340,1510,279,1519,309,1522,290,1528,317,1533,263,1540,286,1548,275,1552,290,1557,229,1562,256,1570,271,1577,294,1584,286,1591,275,1601,321,1609,317,1612,279,1618,240,1625,267,1631,244,1637,279,1642,290,1650,260,1654,237,1663,229,1671,240,1681,248,1693,290,1700,271,1709,244,1714,217,1717,237,1721,363,1725,439,1730,409,1734,439,1739,401,1747,355,1752,451,1757,439,1762,497,1766,451,1776,482,1783,497,1794,489,1797,447,1805,466,1810,394,1814,355,1822,382,1828,359,1834,420,1841,374,1851,344,1858,378,1867,363,1873,401,1877,428,1885,432,1890,424,1894,489,1904,539,1908,501,1915,543,1925,478,1929,593,1934,524,1936,573,1938,547,1944,638];

const rsiLine = [11,987,38,983,77,985,88,998,99,993,118,998,129,1018,145,1015,154,995,165,998,178,978,189,967,197,978,211,998,239,988,248,983,252,1030,261,1013,269,1032,280,1013,288,995,299,1013,329,1008,351,1030,359,1063,365,1033,384,1027,403,1037,411,1055,422,1052,431,1020,447,995,466,987,477,980,484,960,490,980,505,960,519,947,527,965,535,933,540,948,565,957,573,987,584,1003,603,990,617,1010,631,998,653,1012,672,998,697,1013,708,1010,727,1053,735,1040,742,1075,752,1040,765,1043,776,1025,793,1037,806,1007,826,1005,839,967,850,958,873,966,889,958,893,941,910,933,918,952,934,956,941,1006,945,989,951,1006,962,981,968,956,973,924,980,960,993,951,1005,975,1017,966,1031,974,1045,966,1051,991,1059,985,1071,960,1079,974,1086,981,1091,1025,1098,1004,1106,1031,1118,1023,1122,1002,1128,1008,1134,962,1139,951,1156,970,1171,993,1185,1010,1199,987,1205,962,1215,974,1231,972,1245,998,1260,981,1266,987,1270,1029,1274,1016,1286,1022,1302,1006,1310,989,1326,1000,1334,1012,1341,1002,1353,1009,1381,1000,1399,966,1407,975,1421,962,1434,974,1455,952,1472,954,1483,939,1491,908,1499,920,1510,887,1516,905,1529,914,1546,914,1552,920,1557,908,1569,935,1592,947,1608,964,1618,941,1628,945,1639,966,1656,952,1682,964,1692,979,1712,954,1716,985,1722,1043,1728,1027,1733,1043,1744,1016,1753,1031,1761,1054,1771,1039,1791,1041,1799,1020,1812,991,1827,993,1835,1008,1850,993,1876,1008,1888,1016,1902,1046,1911,1039,1925,1022,1931,1050,1934,1027,1943,1054];
const rsiGold = [11,992,47,982,74,982,118,997,145,1010,162,1010,189,985,206,980,241,993,282,1016,318,1005,351,1017,379,1036,403,1033,428,1042,450,1027,477,993,516,963,543,949,568,950,590,977,614,997,658,1004,697,1006,724,1020,749,1050,771,1049,795,1033,828,1013,845,993,871,964,895,961,926,944,942,952,964,981,982,974,1001,954,1033,968,1061,974,1082,973,1102,985,1118,1010,1128,1014,1148,985,1168,970,1199,997,1235,972,1264,985,1302,1013,1326,1002,1381,1000,1391,998,1427,967,1447,967,1475,958,1506,929,1521,908,1541,904,1572,918,1608,947,1682,954,1702,966,1717,966,1738,1002,1758,1032,1779,1033,1789,1038,1804,1034,1830,1004,1847,996,1881,997,1916,1030,1932,1036,1946,1036];
const rsiBlue = [11,994,47,987,110,986,145,998,176,1000,219,995,247,989,291,1003,329,1007,357,1014,395,1022,425,1034,447,1034,477,1020,505,1003,538,973,573,957,609,968,669,1000,708,1005,751,1025,795,1037,823,1033,839,1023,851,1012,891,983,918,962,936,954,962,962,990,959,1025,968,1061,964,1088,970,1132,990,1160,985,1191,994,1231,977,1254,985,1294,990,1334,1001,1369,1006,1396,998,1442,984,1478,966,1518,941,1554,920,1580,914,1600,920,1656,947,1717,959,1753,985,1789,1014,1814,1028,1850,1019,1896,1004,1934,1016,1946,1023];

const spearman = [12,1107,22,1095,30,1094,38,1104,49,1107,59,1130,63,1117,69,1137,74,1125,82,1142,91,1152,99,1120,104,1105,110,1110,118,1137,129,1152,142,1152,149,1110,156,1098,165,1100,170,1110,181,1097,195,1097,200,1110,208,1147,217,1152,222,1133,228,1110,236,1123,248,1100,258,1140,266,1140,273,1123,279,1143,285,1110,293,1097,302,1110,309,1145,315,1133,320,1110,329,1120,337,1143,351,1150,365,1150,379,1117,384,1122,393,1105,399,1130,406,1150,422,1150,432,1103,439,1097,453,1098,465,1127,471,1103,488,1100,502,1120,510,1100,518,1094,526,1103,532,1125,543,1101,557,1133,561,1120,573,1148,590,1152,598,1117,604,1097,614,1143,625,1148,636,1097,647,1143,658,1147,666,1127,674,1098,683,1117,690,1143,702,1147,713,1142,727,1150,752,1145,762,1102,773,1117,784,1105,795,1145,805,1103,815,1097,827,1114,831,1100,847,1094,861,1104,869,1125,877,1117,883,1100,914,1096,927,1144,935,1138,944,1147,954,1152,960,1123,966,1104,974,1094,982,1102,992,1137,1001,1100,1009,1138,1015,1135,1025,1106,1031,1127,1039,1102,1049,1104,1059,1144,1071,1102,1079,1096,1090,1145,1104,1140,1116,1145,1127,1100,1148,1098,1156,1131,1160,1150,1191,1152,1199,1104,1207,1094,1217,1102,1225,1138,1236,1117,1245,1148,1253,1152,1260,1102,1267,1098,1276,1147,1282,1147,1291,1112,1295,1119,1304,1100,1318,1097,1330,1142,1340,1150,1345,1131,1353,1112,1360,1127,1367,1110,1373,1117,1385,1100,1398,1094,1411,1100,1421,1108,1427,1100,1435,1142,1442,1144,1449,1108,1460,1097,1475,1112,1485,1096,1503,1100,1518,1100,1530,1137,1538,1108,1552,1115,1558,1101,1569,1131,1577,1150,1592,1127,1600,1138,1607,1152,1615,1104,1625,1100,1638,1147,1644,1147,1655,1104,1664,1096,1677,1142,1684,1152,1699,1152,1707,1110,1716,1094,1728,1146,1735,1152,1747,1104,1758,1144,1768,1152,1781,1129,1787,1145,1802,1104,1814,1099,1827,1108,1836,1144,1840,1131,1847,1119,1855,1096,1865,1127,1878,1148,1911,1151,1926,1106,1934,1125,1945,1149];
const ssrc = [11,1247,16,1208,22,1191,36,1191,42,1215,52,1361,58,1366,62,1362,66,1384,74,1380,80,1384,96,1380,104,1313,112,1384,115,1342,124,1380,128,1384,142,1384,148,1330,154,1219,159,1191,191,1191,198,1219,207,1370,212,1384,222,1384,229,1340,238,1220,247,1340,255,1384,267,1384,276,1290,284,1202,290,1191,297,1191,302,1219,310,1366,316,1380,345,1380,352,1384,365,1384,376,1290,388,1203,398,1330,404,1384,414,1384,424,1330,433,1211,441,1191,549,1191,556,1219,568,1372,576,1384,588,1384,596,1340,607,1216,616,1340,623,1374,632,1320,643,1233,652,1330,658,1374,668,1290,679,1203,690,1340,697,1384,746,1384,753,1340,762,1219,771,1191,778,1191,784,1215,794,1284,804,1211,810,1191,860,1191,869,1210,879,1210,889,1191,912,1191,917,1215,927,1361,931,1384,951,1384,957,1353,966,1219,972,1191,982,1191,988,1211,999,1369,1003,1384,1010,1384,1017,1365,1029,1219,1033,1193,1040,1193,1044,1217,1053,1353,1057,1367,1070,1211,1075,1195,1079,1215,1089,1365,1094,1384,1112,1384,1117,1365,1128,1211,1131,1191,1149,1191,1154,1219,1165,1369,1169,1384,1186,1384,1190,1353,1200,1215,1205,1191,1220,1191,1226,1215,1237,1372,1242,1384,1252,1382,1272,1382,1286,1384,1292,1365,1302,1211,1306,1191,1316,1191,1322,1219,1332,1361,1336,1384,1344,1384,1351,1361,1361,1219,1365,1191,1420,1191,1427,1211,1436,1330,1438,1361,1449,1219,1458,1191,1526,1191,1529,1198,1546,1198,1554,1191,1560,1191,1565,1211,1577,1369,1582,1384,1602,1384,1607,1353,1615,1219,1623,1191,1627,1191,1633,1219,1644,1361,1656,1219,1663,1191,1670,1211,1684,1376,1688,1384,1693,1384,1699,1365,1709,1271,1721,1365,1728,1384,1737,1384,1743,1365,1749,1340,1757,1342,1764,1372,1768,1384,1779,1384,1786,1361,1797,1211,1802,1191,1823,1191,1829,1211,1841,1359,1856,1198,1863,1234,1874,1376,1877,1384,1915,1384,1920,1359,1927,1357,1943,1382];

const pairs = ['AUDCAD', 'AUDJPY', 'AUDNZD', 'AUDUSD', 'AUDCHF', 'CHFJPY', 'CADJPY', 'EURAUD', 'EURCAD', 'EURGBP', 'EURJPY', 'EURNZD', 'EURUSD', 'GBPAUD', 'GBPCAD', 'GBPJPY', 'GBPNZD', 'GBPUSD', 'GBPCHF', 'NZDCAD', 'NZDJPY', 'NZDCHF', 'NZDUSD', 'USDCAD', 'USDJPY', 'USDCHF', 'XAUUSD', 'XAGUSD'];
const times = ['2023', '02:05', '03:09', '04:13', '05:17', '06:21', '07:25', '08:29', '09:33', '10:37', '11:41', '12:45', '13:49', '14:53', '15:57', '17:01'];

let seed = 7;
function random() {
    seed = (seed * 16807) % 2147483647;
    return seed / 2147483647;
}

function add(id, tag, attrs) {
    const el = document.createElementNS(SVG, tag);
    for (const key in attrs) el.setAttribute(key, attrs[key]);
    document.getElementById(id).appendChild(el);
    return el;
}

function line(id, points, stroke, extra) {
    add(id, 'polyline', Object.assign({ points: points.join(' '), stroke: stroke }, extra));
}

function level(id, y, stroke) {
    add(id, 'path', { d: `M10 ${y}H2464`, stroke: stroke });
}

// one value for each bar, bars are 2 units wide
function sample(points, noise, smooth) {
    const out = [];
    let i = 0;
    for (let x = points[0]; x <= LAST_X; x += 2) {
        while (i < points.length - 4 && x > points[i + 2]) i += 2;
        let t = (x - points[i]) / (points[i + 2] - points[i]);
        if (smooth) t = (1 - Math.cos(Math.PI * t)) / 2;
        const y = points[i + 1] + t * (points[i + 3] - points[i + 1]);
        out.push([x, y + (random() - 0.5) * noise]);
    }
    return out;
}

function drawPrice() {
    const bars = sample(price, 0);
    const paths = { '#3cb371': '', '#f4a460': '', '#ffff2e': '' };
    const average = [];
    let ema = bars[0][1];
    bars.forEach(([x, y], n) => {
        const prev = bars[Math.max(0, n - 1)][1];
        const size = x < 250 ? 3 : x < 830 ? 8 : 18;
        const mid = y + (random() - 0.5) * size * 0.5;
        const high = Math.min(mid, prev) - random() * size * 0.45;
        const low = Math.max(mid, prev) + random() * size * 0.45;
        let color = mid < prev ? '#3cb371' : '#f4a460';
        if (random() < (x < 250 ? 0.12 : 0.01)) color = '#ffff2e';
        paths[color] += `M${x} ${Math.round(high)}V${Math.round(low) + 2}`;
        ema += (y - ema) * 0.1;
        average.push(x, Math.round(ema));
    });
    line('bands', average, '#daa12e');
    for (const color in paths) add('price', 'path', { d: paths[color], stroke: color });
}

// thick marks where the curve runs near its limits
function drawSpearman() {
    const points = sample(spearman, 0, true);
    line('spearman', points.map(p => p.map(Math.round)), '#a9a9a9');
    let high = '';
    let low = '';
    points.forEach(([x, y]) => {
        const mark = `M${x - 3} ${Math.round(y)}h6`;
        if (y < 1103) high += mark;
        if (y > 1145.500) low += mark;
    });
    add('spearman', 'path', { d: high, stroke: '#1ebfff', 'stroke-width': 8 });
    add('spearman', 'path', { d: low, stroke: '#f4a460', 'stroke-width': 7 });
}

function label(axis, top, height, y, text, color, cls) {
    const span = document.createElement('span');
    span.textContent = text;
    span.className = cls || '';
    span.style.top = ((y - top) / height * 100) + '%';
    if (color) span.style.backgroundColor = color;
    document.getElementById(axis).appendChild(span);
}

level('bands', 637, '#c0c0c0');
line('bands', magentaMid, '#ff2aff');
line('bands', red, '#ff0f1e');
line('bands', magentaUpper, '#ff2aff');
line('bands', magentaLower, '#ff2aff');
add('bands', 'path', { d: 'M1880 103H1890', stroke: '#ff2aff' });
line('bands', blueUpper, '#1ebfff');
line('bands', blueMid, '#1ebfff');
line('bands', blueLower, '#1ebfff');
line('bands', cyan, '#2affff');
line('bands', whiteFast, '#fff');
line('bands', whiteSlow, '#fff');
drawPrice();
level('price', 219, '#ff0f1e');
add('price', 'path', { d: 'M1936 102H1954L1945 112Z', fill: '#c0c0c0' });

line('rsi', sample(rsiLine, 9).map(p => p.map(Math.round)), '#fff');
[[897, '#ff0f1e'], [965, '#ff2aff'], [999, '#2affff'], [1033, '#3cb371'], [1067, '#2e8b57']].forEach(l => level('rsi', l[0], l[1]));
line('rsi', rsiGold, '#daa12e', { 'stroke-width': 5 });
line('rsi', rsiBlue, '#1e90ff', { 'stroke-width': 5 });

drawSpearman();

line('ssrc', ssrc, '#fff');
[1202, 1212, 1219, 1288, 1356, 1364, 1374].forEach(y => level('ssrc', y, '#707070'));

[[133, '1.27943'], [201, '1.27828'], [267, '1.27718'], [335, '1.27603'], [401, '1.27493'], [467, '1.27383'], [535, '1.27268'], [601, '1.27158'], [667, '1.27048'], [733, '1.26938'], [799, '1.26828'], [865, '1.26718']].forEach(([y, text]) => {
    label('axis-price', 100, 772, y, text);
    label('axis-price', 100, 772, y, '', '', 'tick');
});
label('axis-price', 100, 772, 217, '1.27797', '#ff0f1e', 'tag');
label('axis-price', 100, 772, 637, '1.27097', '#d3d3d3', 'tag');

label('axis-rsi', 874, 214, 888, '73.2944');
label('axis-rsi', 874, 214, 1073, '35.9296');
[[895, '68.7500', '#ff0f1e'], [963, '56.1912', '#ff2aff'], [997, '50.0000', '#2affff'], [1031, '43.7500', '#3cb371'], [1065, '37.5168', '#2e8b57']].forEach(([y, text, color]) => {
    label('axis-rsi', 874, 214, y, text, color, 'tag');
});

[[1105, '1'], [1123, '0.00'], [1141, '-1']].forEach(l => label('axis-spearman', 1090, 66, l[0], l[1]));
[[1174, '1.3'], [1287, '0.00'], [1399, '-1.3']].forEach(l => label('axis-ssrc', 1158, 256, l[0], l[1]));
[[1202, '0.9'], [1212, '0.8'], [1219, '0.7'], [1287, '0'], [1355, '-0.7'], [1364, '-0.8'], [1373, '-0.9']].forEach(l => label('axis-ssrc', 1158, 256, l[0], l[1], '', 'near'));
[[1432, '1'], [1455, '0']].forEach(l => label('axis-cross', 1416, 54, l[0], l[1]));

// end ticks of each scale
[['axis-rsi', 874, 214], ['axis-spearman', 1090, 66], ['axis-ssrc', 1158, 256], ['axis-cross', 1416, 54]].forEach(([id, top, height]) => {
    label(id, top, height, top + 4, '', '', 'tick');
    label(id, top, height, top + height - 3, '', '', 'tick');
});
label('axis-spearman', 1090, 66, 1123, '', '', 'tick');
label('axis-ssrc', 1158, 256, 1288, '', '', 'tick');

document.getElementById('pairs').innerHTML = pairs.map(name => `<li>${name}</li>`).join('');
document.getElementById('times').innerHTML = times.map(time => `<li>6 Jul ${time}</li>`).join('');
```
